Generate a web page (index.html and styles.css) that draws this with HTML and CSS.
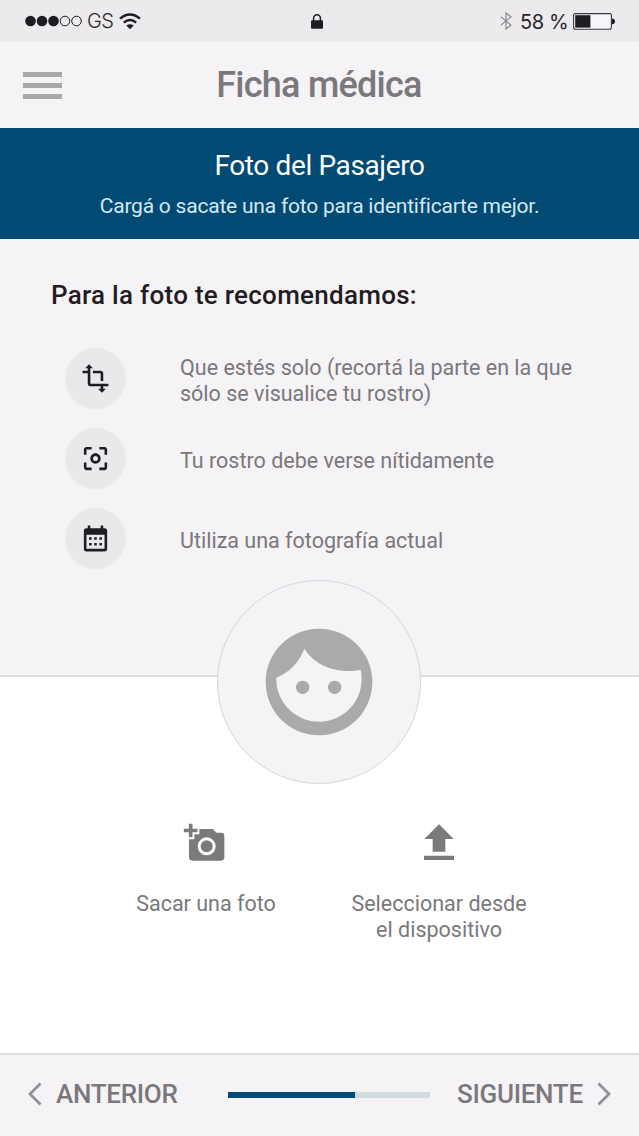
FILE: index.html
```html
<!DOCTYPE html>
<html lang="es">
<head>
<meta charset="utf-8">
<title>Ficha médica</title>
<link rel="stylesheet" href="styles.css">
</head>
<body>
<div class="app">
  <div class="status">
    <div class="status-left">
      <svg width="57" height="12" viewBox="0 0 57 12"><g fill="#1f1d22"><circle cx="5.5" cy="6" r="5.3"/><circle cx="17" cy="6" r="5.3"/><circle cx="28.5" cy="6" r="5.3"/></g><g fill="none" stroke="#1f1d22"><circle cx="40" cy="6" r="4.8"/><circle cx="51.5" cy="6" r="4.8"/></g></svg>
      <span class="carrier">GS</span>
      <svg width="22" height="17" viewBox="0 0 22 17"><g fill="none" stroke="#1f1d22" stroke-width="2.4"><path d="M1 5.6Q11-2.6 21 5.6"/><path d="M4.8 9.6Q11 4.4 17.2 9.6"/></g><path d="M7.3 12.5Q11 9.8 14.7 12.5L11 16.3Z" fill="#1f1d22"/></svg>
    </div>
    <svg class="lock" width="12" height="15" viewBox="0 0 12 15"><path d="M2.6 7V4.2a3.4 3.4 0 0 1 6.8 0V7" fill="none" stroke="#1f1d22" stroke-width="1.5"/><rect y="6.2" width="12" height="8.6" rx="1.2" fill="#1f1d22"/></svg>
    <div class="status-right">
      <svg width="12" height="18" viewBox="0 0 12 18"><path d="M1 4.8l10 8.4L6 17V1l5 3.8L1 13.2" fill="none" stroke="#858388" stroke-width="1.1"/></svg>
      <span class="percent">58 %</span>
      <svg width="42" height="17" viewBox="0 0 42 17"><rect x=".6" y=".6" width="37.8" height="15.6" rx="2" fill="#f7f5f9" stroke="#39373c" stroke-width="1.1"/><rect x="2.2" y="2.2" width="15.2" height="12.4" fill="#1f1d22"/><path d="M39 5.6q3 .4 3 2.8t-3 2.8z" fill="#1f1d22"/></svg>
    </div>
  </div>
  <header class="header">
    <div class="menu"><i></i><i></i><i></i></div>
    <h1 class="title">Ficha médica</h1>
  </header>
  <section class="banner">
    <h2 class="banner-title">Foto del Pasajero</h2>
    <p class="banner-text">Cargá o sacate una foto para identificarte mejor.</p>
  </section>
  <section class="tips">
    <h3 class="tips-title">Para la foto te recomendamos:</h3>
    <ul class="tips-list">
      <li class="tip">
        <span class="tip-icon"><svg width="31" height="31" viewBox="0 0 24 24"><path d="M22 18v-2H8V4h2L7 1 4 4h2v2H2v2h4v8c0 1.1.9 2 2 2h8v2h-2l3 3 3-3h-2v-2h4zM10 8h6v6h2V8c0-1.1-.9-2-2-2h-6v2z"/></svg></span>
        <span class="tip-text"><span class="line">Que estés solo (recortá la parte en la que</span><span class="line">sólo se visualice tu rostro)</span></span>
      </li>
      <li class="tip">
        <span class="tip-icon"><svg width="31" height="31" viewBox="0 0 24 24"><path d="M5 15H3v4c0 1.1.9 2 2 2h4v-2H5v-4zM5 5h4V3H5c-1.1 0-2 .9-2 2v4h2V5zm14-2h-4v2h4v4h2V5c0-1.1-.9-2-2-2zm0 16h-4v2h4c1.1 0 2-.9 2-2v-4h-2v4zM12 8c-2.21 0-4 1.79-4 4s1.79 4 4 4 4-1.79 4-4-1.79-4-4-4zm0 6c-1.1 0-2-.9-2-2s.9-2 2-2 2 .9 2 2-.9 2-2 2z"/></svg></span>
        <span class="tip-text">Tu rostro debe verse nítidamente</span>
      </li>
      <li class="tip">
        <span class="tip-icon"><svg width="31" height="31" viewBox="0 0 24 24"><path fill-rule="evenodd" d="M5 4h1V2h2v2h8V2h2v2h1a2 2 0 0 1 2 2v14a2 2 0 0 1-2 2H5a2 2 0 0 1-2-2V6a2 2 0 0 1 2-2zM5 9v11h14V9z"/><path d="M7 11h2v2H7zM11 11h2v2h-2zM15 11h2v2h-2zM7 15.500h2v2H7zM11 15.500h2v2h-2zM15 15.500h2v2h-2z"/></svg></span>
        <span class="tip-text">Utiliza una fotografía actual</span>
      </li>
    </ul>
  </section>
  <main class="upload">
    <div class="avatar">
      <svg width="108" height="108" viewBox="197 174 324 324" fill="#aba9ac"><path fill-rule="evenodd" d="M359 176a160 160 0 1 0 0 320 160 160 0 1 0 0-320zM231 323Q292 297 315 236C350 292 418 311 484 300A128 128 0 1 1 231 323z"/><circle cx="310" cy="352" r="20"/><circle cx="406" cy="352" r="20"/></svg>
    </div>
    <div class="actions">
      <div class="action">
        <svg class="camera" width="42" height="38" viewBox="190 38 126 114" fill="#7b797c"><path d="M207.500 40h11v15h15v11h-15v15h-11V66h-15V55h15z"/><path fill-rule="evenodd" d="M239 56h40l11 11h14q10 0 10 10v64q0 10-10 10h-86q-10 0-10-10V87h16V72h15zM261 81a27 27 0 1 0 0 54 27 27 0 1 0 0-54z"/><circle cx="261" cy="108" r="18"/></svg>
        <p class="action-text">Sacar una foto</p>
      </div>
      <div class="action">
        <svg width="42" height="38" viewBox="264 38 126 114" fill="#7b797c"><path d="M327 42l44 44h-25v38h-38V86h-25zM282 136h90v13h-90z"/></svg>
        <p class="action-text"><span class="line">Seleccionar desde</span><span class="line">el dispositivo</span></p>
      </div>
    </div>
  </main>
  <footer class="footer">
    <svg width="14" height="24" viewBox="0 0 14 24"><path d="M12.500 1.500L2 12l10.500 10.500" fill="none" stroke="#929095" stroke-width="2.800"/></svg>
    <span class="nav prev">ANTERIOR</span>
    <div class="progress"><div class="progress-fill"></div></div>
    <span class="nav next">SIGUIENTE</span>
    <svg width="14" height="24" viewBox="0 0 14 24"><path d="M1.500 1.500L12 12 1.500 22.500" fill="none" stroke="#929095" stroke-width="2.800"/></svg>
  </footer>
</div>
</body>
</html>
```
FILE: styles.css
```css
* { box-sizing: border-box; margin: 0; padding: 0; }
body { font-family: Roboto, sans-serif; color: #7a787b; background: #fff; }
svg { display: block; flex: none; }
.line { display: block; }
.app { width: 639px; height: 1136px; display: flex; flex-direction: column; overflow: hidden; white-space: nowrap; }

.status { height: 42px; background: #eceaed; display: grid; grid-template-columns: 286px 12px 1fr; align-items: center; padding: 0 24px 0 25px; font-family: Inter, sans-serif; color: #29272c; }
.status-left { display: flex; align-items: center; }
.carrier { font-size: 20px; font-weight: 300; letter-spacing: -0.6px; width: 26px; margin: 0 6px 0 5px; }
.status-right { display: flex; align-items: center; justify-content: flex-end; }
.percent { font-size: 20px; font-weight: 400; letter-spacing: -0.4px; width: 47px; margin: 2px 6px 0 8px; }

.header { height: 86px; background: #f5f3f6; display: grid; grid-template-columns: 39px 1fr 39px; align-items: center; padding: 0 24px 0 23px; }
.menu { display: grid; gap: 6px; padding-top: 1px; }
.menu i { height: 4.700px; background: #a9a7aa; }
.title { font-size: 36px; font-weight: 500; line-height: 42px; letter-spacing: -0.75px; text-align: center; }

.banner { height: 111px; background: #004a73; text-align: center; padding-top: 21px; }
.banner-title { font-size: 28px; font-weight: 400; line-height: 34px; letter-spacing: -0.37px; color: #fff; }
.banner-text { font-size: 21px; line-height: 26px; letter-spacing: -0.22px; margin-top: 10px; color: #d5e7f1; }

.tips { height: 438px; background: #f5f3f6; border-bottom: 2px solid #dddbdf; padding: 40px 0 0 51px; }
.tips-title { font-size: 26px; font-weight: 500; line-height: 32px; letter-spacing: 0.28px; color: #1f1d22; }
.tips-list { list-style: none; margin-top: 37px; padding-left: 14px; display: grid; gap: 19px; }
.tip { display: flex; align-items: center; gap: 54px; }
.tip-icon { width: 61px; height: 61px; border-radius: 50%; background: #eae8eb; display: flex; align-items: center; justify-content: center; fill: #1f1d22; }
.tip-text { font-size: 21.500px; line-height: 26px; padding-top: 4px; }

.upload { flex: 1; display: flex; flex-direction: column; align-items: center; }
.avatar { width: 204px; height: 204px; margin: -97px 1px 0 0; border: 1.500px solid #d7d5d9; border-radius: 50%; background: #f5f3f6; display: flex; align-items: center; justify-content: center; }
.actions { width: 466px; margin: 39px 0 0 6px; display: grid; grid-template-columns: 1fr 1fr; }
.action { display: flex; flex-direction: column; align-items: center; }
.camera { margin-right: 5px; }
.action-text { font-size: 21.500px; line-height: 26px; margin-top: 30px; text-align: center; }

.footer { height: 83px; background: #f5f3f6; border-top: 2px solid #dad8dc; display: flex; align-items: center; padding: 0 28px 3px; }
.nav { font-size: 26px; font-weight: 500; line-height: 30px; letter-spacing: -0.3px; }
.prev { width: 122px; margin-left: 14px; }
.progress { width: 202px; height: 6px; margin: 2px 27px 0 50px; background: #d0dce0; }
.progress-fill { width: 63%; height: 6px; background: #004a73; }
.next { width: 128px; margin-right: 12px; }
```
